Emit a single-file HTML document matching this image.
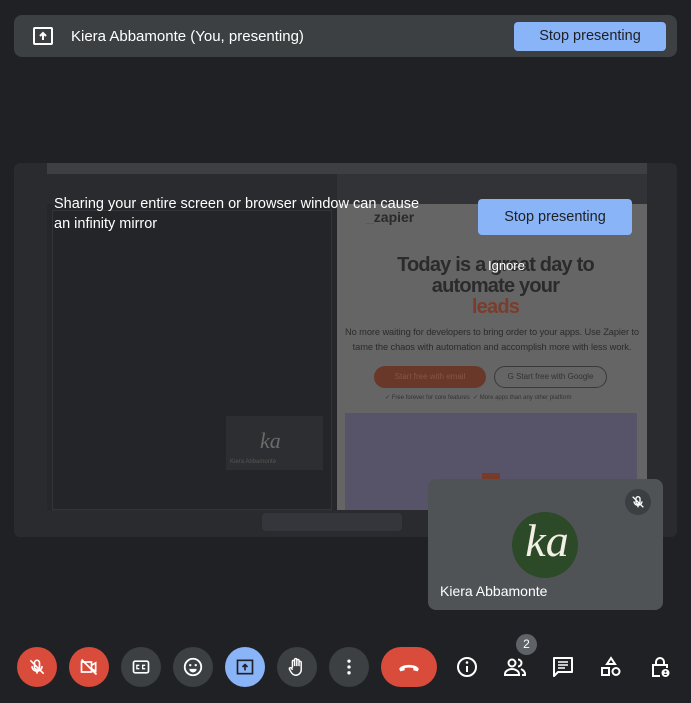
<!DOCTYPE html>
<html><head><style>
*{margin:0;padding:0;box-sizing:border-box}
body{width:691px;height:703px;background:#202124;position:relative;overflow:hidden;font-family:"Liberation Sans",sans-serif;color:#fff}
.a{position:absolute}
.btn{position:absolute;top:647px;width:40px;height:40px;border-radius:20px;background:#3c4043;display:flex;align-items:center;justify-content:center}
.ic{position:absolute;top:655px;width:24px;height:24px}
</style></head><body>
<!-- top bar -->
<div class="a" style="left:14px;top:15px;width:663px;height:42px;background:#3c4043;border-radius:8px"></div>
<div class="a" style="left:33px;top:27px;width:20px;height:18px;border:2px solid #fff;border-radius:2px"></div>
<svg class="a" style="left:36px;top:29px" width="14" height="14" viewBox="0 0 14 14"><path d="M7 11V4M4 7l3-3 3 3" stroke="#fff" stroke-width="2" fill="none"/></svg>
<div class="a" style="left:71px;top:28px;font-size:15px">Kiera Abbamonte (You, presenting)</div>
<div class="a" style="left:514px;top:22px;width:152px;height:29px;background:#8ab4f8;border-radius:4px;color:#202124;font-size:14.5px;text-align:center;line-height:29px">Stop presenting</div>

<!-- presentation -->
<div class="a" style="left:14px;top:163px;width:663px;height:374px;background:#2a2b2e;border-radius:6px"></div>
<div class="a" style="left:47px;top:163px;width:600px;height:374px;background:#26272a"></div>
<div class="a" style="left:47px;top:163px;width:600px;height:11px;background:#3e3f42"></div>
<div class="a" style="left:47px;top:174px;width:290px;height:30px;background:#2a2b2e"></div>
<div class="a" style="left:337px;top:174px;width:310px;height:30px;background:#323336"></div>
<div class="a" style="left:337px;top:204px;width:310px;height:306px;background:#656566"></div>
<div class="a" style="left:345px;top:413px;width:292px;height:97px;background:#57546a"></div>
<div class="a" style="left:482px;top:473px;width:18px;height:6px;background:#7a3a2a"></div>
<div class="a" style="left:366px;top:209px;color:#8a3a2a;font-size:14px;font-weight:bold">_<span style="color:#2a2a2a">zapier</span></div>
<div class="a" style="left:337px;top:255px;width:345px;text-align:center;color:#2b2b2b;font-size:20px;line-height:21px;font-weight:bold;letter-spacing:-0.8px;transform:translateX(-14px)">Today is a great day to<br>automate your<br><span style="color:#7a3d2c">leads</span></div>
<div class="a" style="left:337px;top:325px;width:310px;text-align:center;color:#2b2b2b;font-size:9.3px;line-height:15px;letter-spacing:-0.1px">No more waiting for developers to bring order to your apps. Use Zapier to tame the chaos with automation and accomplish more with less work.</div>
<div class="a" style="left:374px;top:366px;width:112px;height:22px;border-radius:11px;background:#6a3828;color:#8a5444;font-size:8px;text-align:center;line-height:22px">Start free with email</div>
<div class="a" style="left:494px;top:366px;width:113px;height:22px;border-radius:11px;border:1px solid #3a3a3a;color:#333;font-size:8px;text-align:center;line-height:20px">G Start free with Google</div>
<div class="a" style="left:385px;top:394px;color:#333;font-size:6px">✓ Free forever for core features &nbsp;✓ More apps than any other platform</div>
<!-- left nested -->
<div class="a" style="left:52px;top:210px;width:280px;height:300px;border:1px solid #343538;background:#242528"></div>
<div class="a" style="left:226px;top:416px;width:97px;height:54px;background:#2d2e31"></div>
<div class="a" style="left:260px;top:428px;font-size:22px;font-style:italic;color:#6a6a6a;font-family:'Liberation Serif',serif">ka</div>
<div class="a" style="left:230px;top:459px;font-size:6px;color:#555">Kiera Abbamonte</div>
<div class="a" style="left:47px;top:510px;width:600px;height:27px;background:#2a2b2e"></div>
<div class="a" style="left:262px;top:513px;width:140px;height:18px;background:#35363b;border-radius:4px"></div>
<div class="a" style="left:54px;top:194px;font-size:14.5px;line-height:20px;width:384px">Sharing your entire screen or browser window can cause<br>an infinity mirror</div>
<div class="a" style="left:478px;top:199px;width:154px;height:36px;background:#8ab4f8;border-radius:4px;color:#202124;font-size:14.5px;text-align:center;line-height:36px">Stop presenting</div>
<div class="a" style="left:488px;top:258px;font-size:13px;color:#fff">Ignore</div>

<!-- tile -->
<div class="a" style="left:428px;top:479px;width:235px;height:131px;background:#505356;border-radius:8px"></div>
<div class="a" style="left:625px;top:489px;width:26px;height:26px;border-radius:13px;background:#3c3f42"></div>
<svg class="a" style="left:630px;top:494px" width="16" height="16" viewBox="0 0 24 24"><path d="M12 4a3 3 0 0 1 3 3v5a3 3 0 0 1-6 0V7a3 3 0 0 1 3-3zM6 11a6 6 0 0 0 12 0M12 17v3M4 4l16 16" stroke="#fff" stroke-width="2" fill="none"/></svg>
<div class="a" style="left:512px;top:512px;width:66px;height:66px;border-radius:33px;background:#2c4a27"></div>
<div class="a" style="left:512px;top:518px;width:70px;text-align:center;font-size:46px;font-style:italic;color:#f3f0e6;font-family:'Liberation Serif',serif;line-height:46px">ka</div>
<div class="a" style="left:440px;top:583px;font-size:14px">Kiera Abbamonte</div>

<!-- bottom bar -->
<div class="btn" style="left:17px;background:#d94b3b"><svg width="20" height="20" viewBox="0 0 24 24"><path d="M12 4a3 3 0 0 1 3 3v5a3 3 0 0 1-6 0V7a3 3 0 0 1 3-3zM6 11a6 6 0 0 0 12 0M12 17v3M4 4l16 16" stroke="#fff" stroke-width="2" fill="none"/></svg></div>
<div class="btn" style="left:69px;background:#d94b3b"><svg width="20" height="20" viewBox="0 0 24 24"><path d="M3 6h12v12H3zM15 10l5-3v10l-5-3M3 3l18 18" stroke="#fff" stroke-width="2" fill="none"/></svg></div>
<div class="btn" style="left:121px"><svg width="20" height="20" viewBox="0 0 24 24"><rect x="3" y="5" width="18" height="14" rx="2" stroke="#fff" stroke-width="2" fill="none"/><path d="M10 10H7v4h3M17 10h-3v4h3" stroke="#fff" stroke-width="1.6" fill="none"/></svg></div>
<div class="btn" style="left:173px"><svg width="22" height="22" viewBox="0 0 24 24"><circle cx="12" cy="12" r="9" stroke="#fff" stroke-width="2" fill="none"/><circle cx="9" cy="10" r="1.3" fill="#fff"/><circle cx="15" cy="10" r="1.3" fill="#fff"/><path d="M8 14a4 4 0 0 0 8 0z" fill="#fff"/></svg></div>
<div class="btn" style="left:225px;background:#8ab4f8"><svg width="20" height="20" viewBox="0 0 24 24"><rect x="3" y="4" width="18" height="16" stroke="#202124" stroke-width="2" fill="none"/><path d="M12 16V9M9 12l3-3 3 3" stroke="#202124" stroke-width="2" fill="none"/></svg></div>
<div class="btn" style="left:277px"><svg width="22" height="22" viewBox="0 0 24 24"><path d="M7 13V6a1.2 1.2 0 0 1 2.4 0v5M9.4 11V4a1.2 1.2 0 0 1 2.4 0v7M11.8 11V5a1.2 1.2 0 0 1 2.4 0v6M14.2 11V7a1.2 1.2 0 0 1 2.4 0v8a6 6 0 0 1-6 6c-3 0-4.5-2-6-5l-1-2a1.2 1.2 0 0 1 2-1l1.6 2" stroke="#fff" stroke-width="1.6" fill="none"/></svg></div>
<div class="btn" style="left:329px"><svg width="20" height="20" viewBox="0 0 24 24"><circle cx="12" cy="5" r="2" fill="#fff"/><circle cx="12" cy="12" r="2" fill="#fff"/><circle cx="12" cy="19" r="2" fill="#fff"/></svg></div>
<div class="btn" style="left:381px;width:56px;background:#d94b3b"><svg width="26" height="26" viewBox="0 0 24 24"><path d="M3 14c0-2 4-4 9-4s9 2 9 4l-1 2-4-1v-2c-2-.6-6-.6-8 0v2l-4 1z" fill="#fff"/></svg></div>
<svg class="ic" style="left:455px" viewBox="0 0 24 24"><circle cx="12" cy="12" r="9" stroke="#fff" stroke-width="2" fill="none"/><path d="M12 11v6" stroke="#fff" stroke-width="2"/><circle cx="12" cy="7.5" r="1.3" fill="#fff"/></svg>
<svg class="ic" style="left:503px" viewBox="0 0 24 24"><circle cx="9" cy="8" r="3.5" stroke="#fff" stroke-width="2" fill="none"/><path d="M2 19c0-3 4-5 7-5s7 2 7 5v1H2zM15 4.5a3.5 3.5 0 0 1 0 7M18 14c2 1 4 2.5 4 5v1h-3" stroke="#fff" stroke-width="2" fill="none"/></svg>
<div class="a" style="left:516px;top:634px;width:21px;height:21px;border-radius:11px;background:#5f6368;font-size:12px;text-align:center;line-height:21px">2</div>
<svg class="ic" style="left:551px" viewBox="0 0 24 24"><path d="M3 3h18v14H7l-4 4z" stroke="#fff" stroke-width="2" fill="none" stroke-linejoin="round"/><path d="M7 7h10M7 10h10M7 13h7" stroke="#fff" stroke-width="1.6"/></svg>
<svg class="ic" style="left:599px" viewBox="0 0 24 24"><path d="M12 3l4 6H8z" stroke="#fff" stroke-width="2" fill="none"/><rect x="3" y="13" width="7" height="7" stroke="#fff" stroke-width="2" fill="none"/><circle cx="17" cy="16.5" r="3.5" stroke="#fff" stroke-width="2" fill="none"/></svg>
<svg class="ic" style="left:648px" viewBox="0 0 24 24"><path d="M8 10V7a4 4 0 0 1 8 0v3M12 21H5V10h14v3" stroke="#fff" stroke-width="2" fill="none"/><circle cx="17.5" cy="18" r="4" fill="#fff"/><circle cx="17.5" cy="16.6" r="1" fill="#202124"/><path d="M15.8 20a1.8 1.8 0 0 1 3.4 0" fill="#202124"/></svg>
</body></html>
